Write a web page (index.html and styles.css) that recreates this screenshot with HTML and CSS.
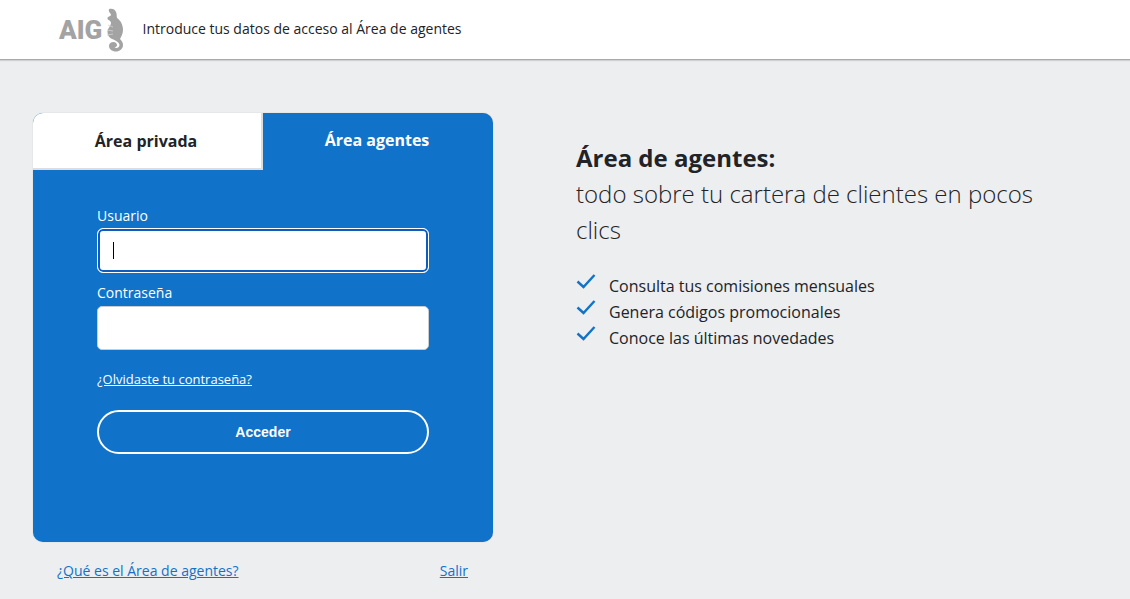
FILE: index.html
```html
<!DOCTYPE html>
<html lang="es">
<head>
  <meta charset="UTF-8" />
  <meta name="viewport" content="width=device-width, initial-scale=1.0"/>
  <title>Área de agentes</title>
  <link rel="stylesheet" href="styles.css">
</head>
<body>
  <header class="topbar">
    <div class="logo">
      <span class="logo-text">AIG</span>
      <svg class="seahorse" width="20" height="44" viewBox="0 0 20 44" aria-hidden="true">
        <path d="M4 1 C7 0 10 1 11 4 C12 6 11.5 8 12 10 C15 12 18 16 18 22 C18 26 16 29 15 31 C17 33 18 35 18 37 C18 41 14.5 43.5 11 43.5 C7 43.5 4 41 4 38 C4 35.5 6 34 8.5 34 C10.5 34 12 35.5 12 37 C12 38.5 10.8 39.5 9.5 39.2 C10.3 40.5 14.5 40.3 14.5 37 C14.5 34.5 11 32.5 7 31 C4 29.8 2.5 27 2.5 24 C2.5 20 6 18 6 15 C6 13.5 5 12.5 3.5 12 C2.5 11.8 2 10 3 9 C4.5 8 6 8 6 6.5 C5 5 3 3 4 1 Z" fill="#a3a3a3"/>
        <path d="M3 17 L8 19 M2 22 L8 23 M2 27 L8 26" fill="none" stroke="#d4d4d4" stroke-width="0.8"/>
      </svg>
    </div>
    <p class="topbar-text">Introduce tus datos de acceso al Área de agentes</p>
  </header>

  <main class="content">
    <section class="login">
      <div class="card">
        <div class="tabs">
          <a class="tab tab-off" href="#">Área privada</a>
          <a class="tab tab-on" href="#">Área agentes</a>
        </div>
        <form class="form">
          <label class="field">
            <span>Usuario</span>
            <span class="input focused"><i class="caret"></i></span>
          </label>
          <label class="field">
            <span>Contraseña</span>
            <span class="input"></span>
          </label>
          <a class="forgot" href="#">¿Olvidaste tu contraseña?</a>
          <button class="submit" type="button">Acceder</button>
        </form>
      </div>
      <div class="below">
        <a href="#">¿Qué es el Área de agentes?</a>
        <a href="#">Salir</a>
      </div>
    </section>

    <section class="info">
      <h1>Área de agentes:</h1>
      <p class="lead">todo sobre tu cartera de clientes en pocos clics</p>
      <ul class="checks">
        <li><svg width="20" height="16" viewBox="0 0 20 16"><path d="M1.5 8.5 L7.5 14 L18.5 2" fill="none" stroke="#1172c8" stroke-width="2.4"/></svg>Consulta tus comisiones mensuales</li>
        <li><svg width="20" height="16" viewBox="0 0 20 16"><path d="M1.5 8.5 L7.5 14 L18.5 2" fill="none" stroke="#1172c8" stroke-width="2.4"/></svg>Genera códigos promocionales</li>
        <li><svg width="20" height="16" viewBox="0 0 20 16"><path d="M1.5 8.5 L7.5 14 L18.5 2" fill="none" stroke="#1172c8" stroke-width="2.4"/></svg>Conoce las últimas novedades</li>
      </ul>
    </section>
  </main>
</body>
</html>
```

FILE: styles.css
```css
body {
  margin: 0;
  height: 599px;
  overflow: hidden;
  background: #edeef0;
  color: #212327;
  font-family: "Open Sans", Arial, sans-serif;
}

.topbar {
  height: 59px;
  background: #fff;
  border-bottom: 1px solid #a9a9a9;
  box-shadow: 0 1px 1px rgba(0, 0, 0, 0.12);
  display: flex;
  align-items: center;
  padding-left: 59px;
}

.logo {
  display: flex;
  align-items: center;
  gap: 3px;
  width: 83.5px;
}

.logo-text {
  font-family: Roboto, Arial, sans-serif;
  font-weight: 900;
  font-size: 26px;
  color: #a3a3a3;
}

.topbar-text {
  margin: 0 0 2px;
  font-size: 14px;
}

.content {
  display: flex;
  padding: 53px 0 0 33px;
}

.login {
  width: 460px;
}

.card {
  height: 429px;
  background: #1072c8;
  border-radius: 10px;
  overflow: hidden;
  box-shadow: 0 0 1px rgba(0, 0, 0, 0.3);
}

.tabs {
  display: flex;
  height: 57px;
}

.tab {
  width: 230px;
  box-sizing: border-box;
  display: flex;
  align-items: center;
  justify-content: center;
  font-size: 16px;
  font-weight: 700;
  text-decoration: none;
}

.tab-off {
  background: #fff;
  color: #212327;
  border-right: 2px solid #dcdde0;
  border-bottom: 2px solid #dcdde0;
  padding-right: 2px;
}

.tab-on {
  color: #fff;
  padding: 0 2px 3px 0;
}

.form {
  display: flex;
  flex-direction: column;
  padding: 36px 64px 0;
}

.field {
  display: block;
  margin-bottom: 10px;
  color: #fff;
  font-size: 14px;
  line-height: 19px;
}

.field > span:first-child {
  display: block;
  margin-bottom: 4px;
}

.input {
  display: flex;
  align-items: center;
  height: 44px;
  box-sizing: border-box;
  background: #fff;
  border: 1px solid #c9ccd1;
  border-radius: 5px;
  padding-left: 15px;
}

.input.focused {
  height: 45px;
  margin-top: -1px;
  border-color: #fff;
  border-radius: 6px;
  box-shadow: inset 0 0 0 2px #0f5cc0;
}

.caret {
  width: 1px;
  height: 17px;
  background: #000;
}

.forgot {
  margin-top: 10px;
  color: #fff;
  font-size: 13px;
  line-height: 18px;
}

.submit {
  margin-top: 22px;
  height: 44px;
  border: 2px solid #fff;
  border-radius: 22px;
  background: transparent;
  color: #fff;
  font-family: "Liberation Sans", Arial, sans-serif;
  font-size: 14px;
  font-weight: 700;
}

.below {
  display: flex;
  justify-content: space-between;
  padding: 19px 25px 0 24px;
  font-size: 14px;
  line-height: 19px;
}

.below a {
  color: #1172c8;
}

.info {
  margin-left: 83px;
  width: 480px;
  padding-top: 27px;
}

.info h1 {
  margin: 0;
  font-size: 24px;
  font-weight: 700;
  line-height: 36px;
}

.lead {
  margin: 0;
  font-size: 24px;
  font-weight: 300;
  line-height: 36px;
}

.checks {
  list-style: none;
  margin: 25px 0 0;
  padding: 0;
  font-size: 16px;
  line-height: 26px;
}

.checks li {
  display: flex;
  align-items: flex-start;
}

.checks svg {
  margin: 0 13px 0 0;
}
```
